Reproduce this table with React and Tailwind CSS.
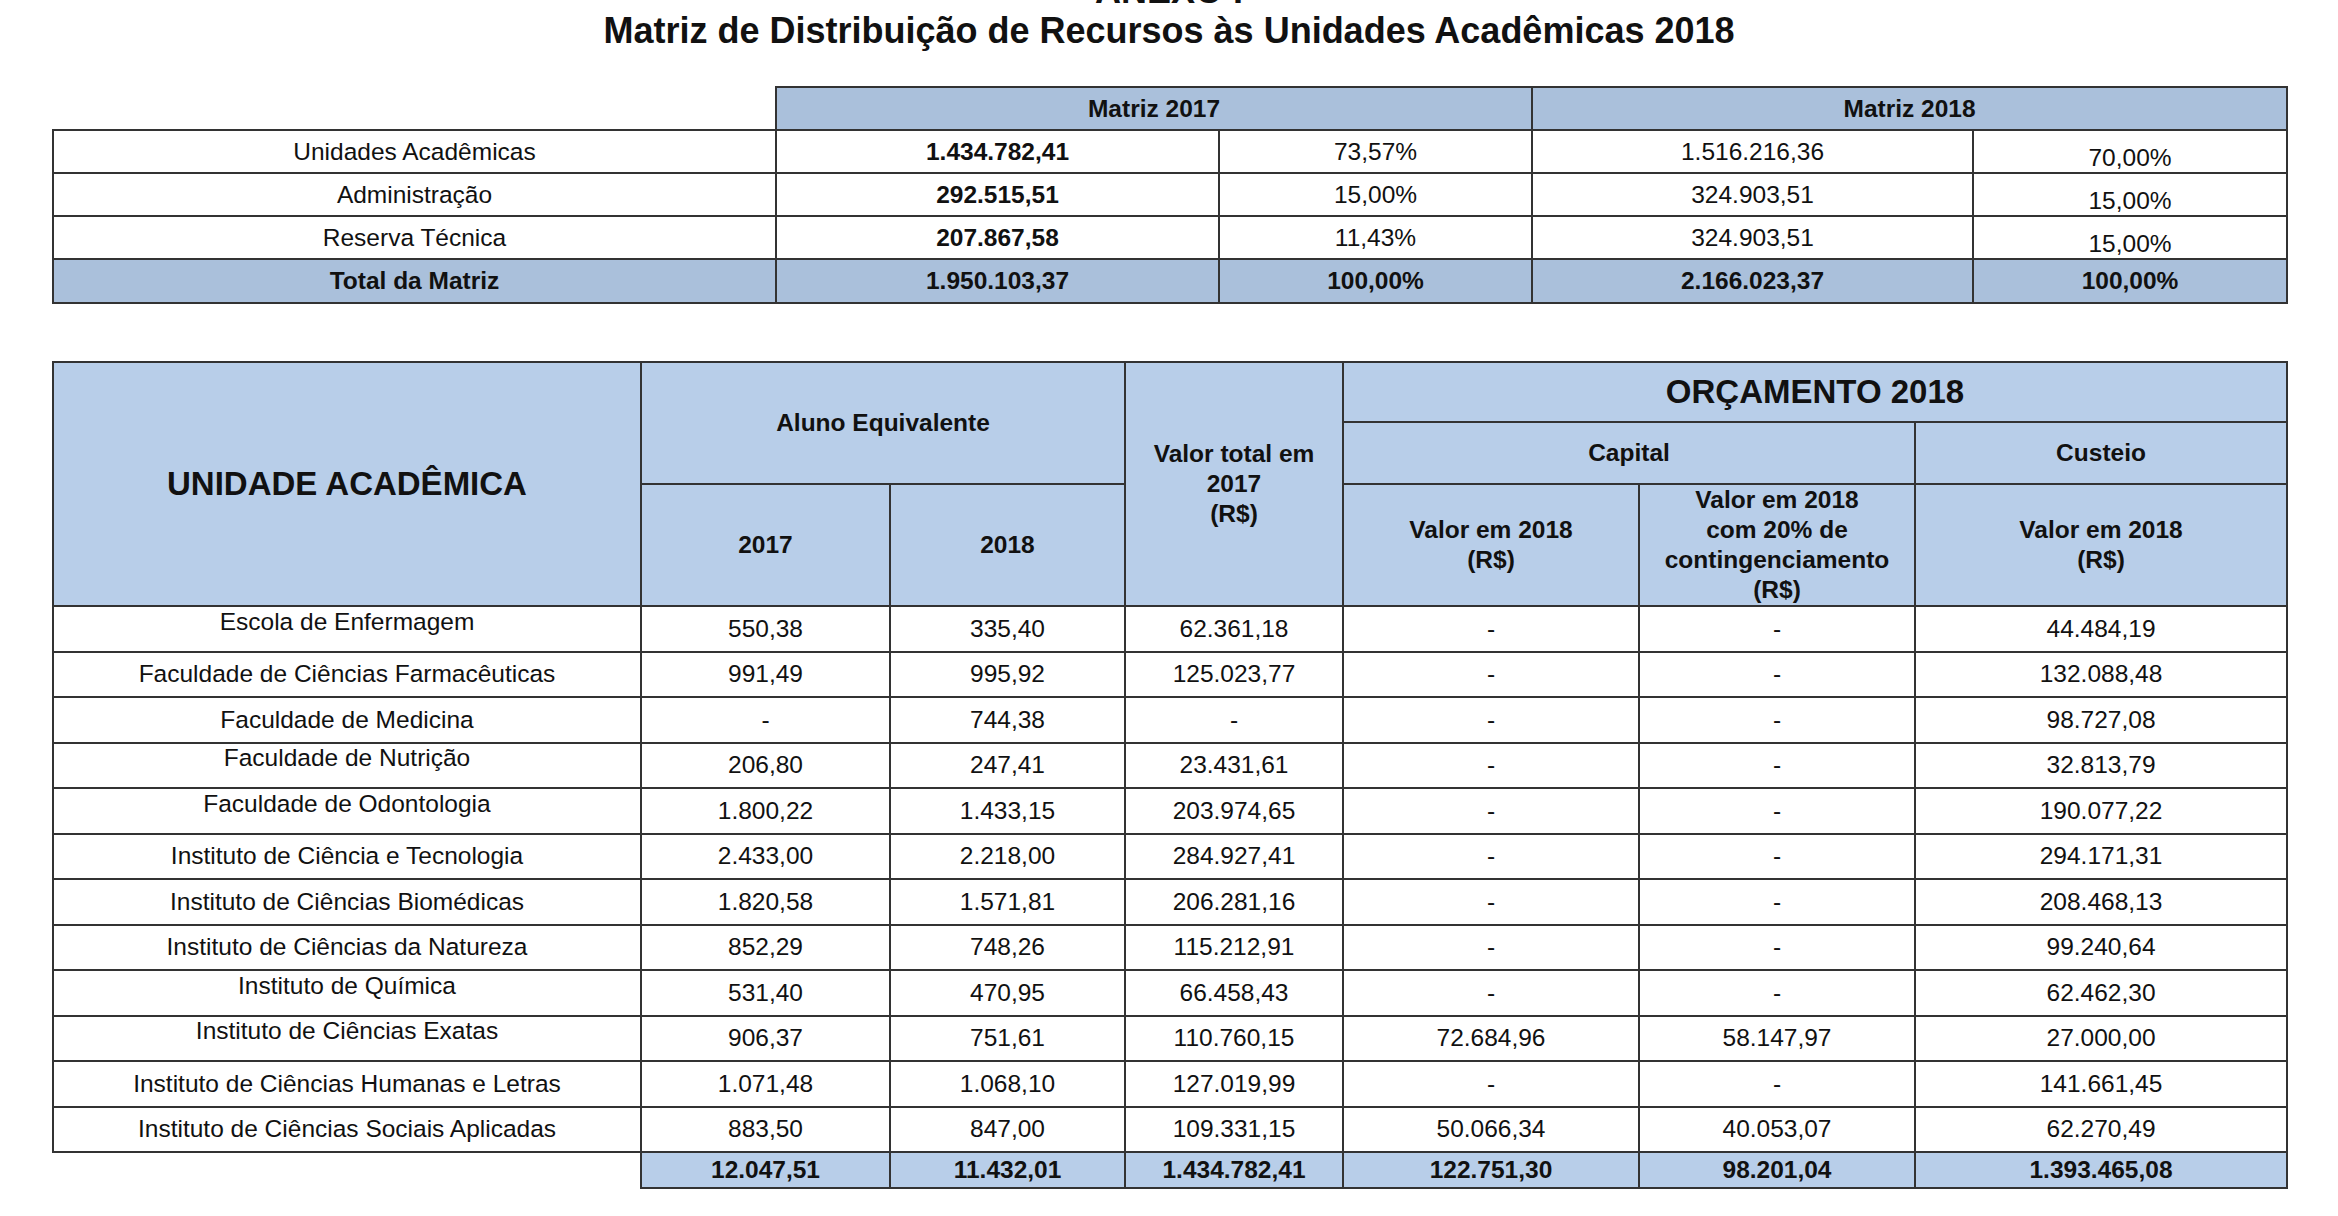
const matriz = [
  ["Unidades Acadêmicas", "1.434.782,41", "73,57%", "1.516.216,36", "70,00%"],
  ["Administração", "292.515,51", "15,00%", "324.903,51", "15,00%"],
  ["Reserva Técnica", "207.867,58", "11,43%", "324.903,51", "15,00%"],
];

// label, aluno 2017, aluno 2018, valor 2017, capital, capital 20%, custeio, label sits higher
const unidades = [
  ["Escola de Enfermagem", "550,38", "335,40", "62.361,18", "-", "-", "44.484,19", true],
  ["Faculdade de Ciências Farmacêuticas", "991,49", "995,92", "125.023,77", "-", "-", "132.088,48", false],
  ["Faculdade de Medicina", "-", "744,38", "-", "-", "-", "98.727,08", false],
  ["Faculdade de Nutrição", "206,80", "247,41", "23.431,61", "-", "-", "32.813,79", true],
  ["Faculdade de Odontologia", "1.800,22", "1.433,15", "203.974,65", "-", "-", "190.077,22", true],
  ["Instituto de Ciência e Tecnologia", "2.433,00", "2.218,00", "284.927,41", "-", "-", "294.171,31", false],
  ["Instituto de Ciências Biomédicas", "1.820,58", "1.571,81", "206.281,16", "-", "-", "208.468,13", false],
  ["Instituto de Ciências da Natureza", "852,29", "748,26", "115.212,91", "-", "-", "99.240,64", false],
  ["Instituto de Química", "531,40", "470,95", "66.458,43", "-", "-", "62.462,30", true],
  ["Instituto de Ciências Exatas", "906,37", "751,61", "110.760,15", "72.684,96", "58.147,97", "27.000,00", true],
  ["Instituto de Ciências Humanas e Letras", "1.071,48", "1.068,10", "127.019,99", "-", "-", "141.661,45", false],
  ["Instituto de Ciências Sociais Aplicadas", "883,50", "847,00", "109.331,15", "50.066,34", "40.053,07", "62.270,49", false],
];

const totais = ["12.047,51", "11.432,01", "1.434.782,41", "122.751,30", "98.201,04", "1.393.465,08"];

const cell = "border-2 border-[#333] text-center align-middle p-0";

export default function App() {
  return (
    <div className="w-[2338px] h-[1216px] overflow-hidden bg-white pl-[52px] font-['Liberation_Sans',Arial,sans-serif] text-[#111]">
      {/* titulo */}
      <div className="-mt-[29px] w-[2234px] text-center text-[36px] font-bold leading-[40px]">
        <div>ANEXO I</div>
        <div>Matriz de Distribuição de Recursos às Unidades Acadêmicas 2018</div>
      </div>

      {/* matriz geral */}
      <table className="mt-[35px] w-[2234px] table-fixed border-collapse text-[24.5px] leading-[28px]">
        <colgroup>
          <col className="w-[723px]" />
          <col className="w-[443px]" />
          <col className="w-[313px]" />
          <col className="w-[441px]" />
          <col className="w-[314px]" />
        </colgroup>
        <thead>
          <tr className="h-[43px]">
            <th className="border-0 p-0"></th>
            <th colSpan={2} className={`${cell} bg-[#aac0db] font-bold`}>Matriz 2017</th>
            <th colSpan={2} className={`${cell} bg-[#aac0db] font-bold`}>Matriz 2018</th>
          </tr>
        </thead>
        <tbody>
          {matriz.map((r) => (
            <tr key={r[0]} className="h-[43px]">
              <td className={cell}>{r[0]}</td>
              <td className={`${cell} font-bold`}>{r[1]}</td>
              <td className={cell}>{r[2]}</td>
              <td className={cell}>{r[3]}</td>
              <td className={`${cell} pt-[12px]`}>{r[4]}</td>
            </tr>
          ))}
          <tr className="h-[44px] bg-[#aac0db] font-bold">
            <td className={cell}>Total da Matriz</td>
            <td className={cell}>1.950.103,37</td>
            <td className={cell}>100,00%</td>
            <td className={cell}>2.166.023,37</td>
            <td className={cell}>100,00%</td>
          </tr>
        </tbody>
      </table>

      {/* distribuicao por unidade */}
      <table className="mt-[57px] w-[2234px] table-fixed border-collapse text-[24.5px] leading-[28px]">
        <colgroup>
          <col className="w-[588px]" />
          <col className="w-[249px]" />
          <col className="w-[235px]" />
          <col className="w-[218px]" />
          <col className="w-[296px]" />
          <col className="w-[276px]" />
          <col className="w-[372px]" />
        </colgroup>
        <thead className="bg-[#b8cee9] font-bold leading-[30px]">
          <tr className="h-[60px]">
            <th rowSpan={3} className={`${cell} text-[33px]`}>UNIDADE ACADÊMICA</th>
            <th colSpan={2} rowSpan={2} className={cell}>Aluno Equivalente</th>
            <th rowSpan={3} className={cell}>
              Valor total em
              <br />
              2017
              <br />
              (R$)
            </th>
            <th colSpan={3} className={`${cell} text-[33px]`}>ORÇAMENTO 2018</th>
          </tr>
          <tr className="h-[62px]">
            <th colSpan={2} className={cell}>Capital</th>
            <th className={cell}>Custeio</th>
          </tr>
          <tr className="h-[120px]">
            <th className={cell}>2017</th>
            <th className={cell}>2018</th>
            <th className={cell}>
              Valor em 2018
              <br />
              (R$)
            </th>
            <th className={cell}>
              Valor em 2018
              <br />
              com 20% de
              <br />
              contingenciamento
              <br />
              (R$)
            </th>
            <th className={cell}>
              Valor em 2018
              <br />
              (R$)
            </th>
          </tr>
        </thead>
        <tbody>
          {unidades.map((u) => (
            <tr key={u[0]} className="h-[45.5px]">
              <td className={`${cell} ${u[7] ? "pb-[14px]" : ""}`}>{u[0]}</td>
              {u.slice(1, 7).map((v, i) => (
                <td key={i} className={cell}>{v}</td>
              ))}
            </tr>
          ))}
          <tr className="h-[36px] font-bold">
            <td className="border-0 p-0"></td>
            {totais.map((t) => (
              <td key={t} className={`${cell} bg-[#b8cee9]`}>{t}</td>
            ))}
          </tr>
        </tbody>
      </table>
    </div>
  );
}
